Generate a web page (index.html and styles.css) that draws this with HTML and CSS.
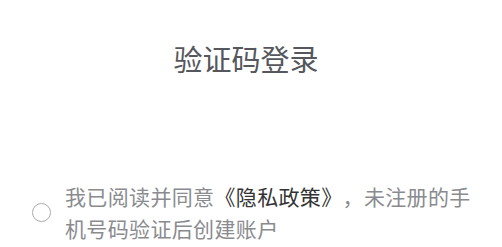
FILE: index.html
```html
<!DOCTYPE html>
<html lang="zh-CN">
<head>
<meta charset="utf-8">
<link rel="stylesheet" href="styles.css">
</head>
<body>
<div class="page">
  <h1 class="title">验证码登录</h1>
  <div class="agree">
    <span class="radio"></span>
    <p class="agree-text">我已阅读并同意<span class="link">《隐私政策》</span>，未注册的手机号码验证后创建账户</p>
  </div>
</div>
</body>
</html>
```
FILE: styles.css
```css
html, body {
  margin: 0;
  padding: 0;
  background: #ffffff;
}
.page {
  width: 502px;
  height: 247px;
  font-family: "Noto Sans CJK SC", "Noto Sans", sans-serif;
  overflow: hidden;
}
.title {
  margin: 0;
  padding: 38px 10px 0 0;
  text-align: center;
  font-size: 29px;
  line-height: 40px;
  font-weight: 400;
  color: #55575c;
}
.agree {
  display: flex;
  align-items: center;
  gap: 14px;
  margin-top: 102px;
  padding: 0 16px 0 32px;
}
.radio {
  flex: none;
  width: 17px;
  height: 17px;
  border: 1.5px solid #ababab;
  border-radius: 50%;
}
.agree-text {
  margin: 0;
  font-size: 21px;
  line-height: 32px;
  letter-spacing: 0.35px;
  color: #8a8b8f;
  text-spacing-trim: space-all;
}
.link {
  color: #333333;
}
```
